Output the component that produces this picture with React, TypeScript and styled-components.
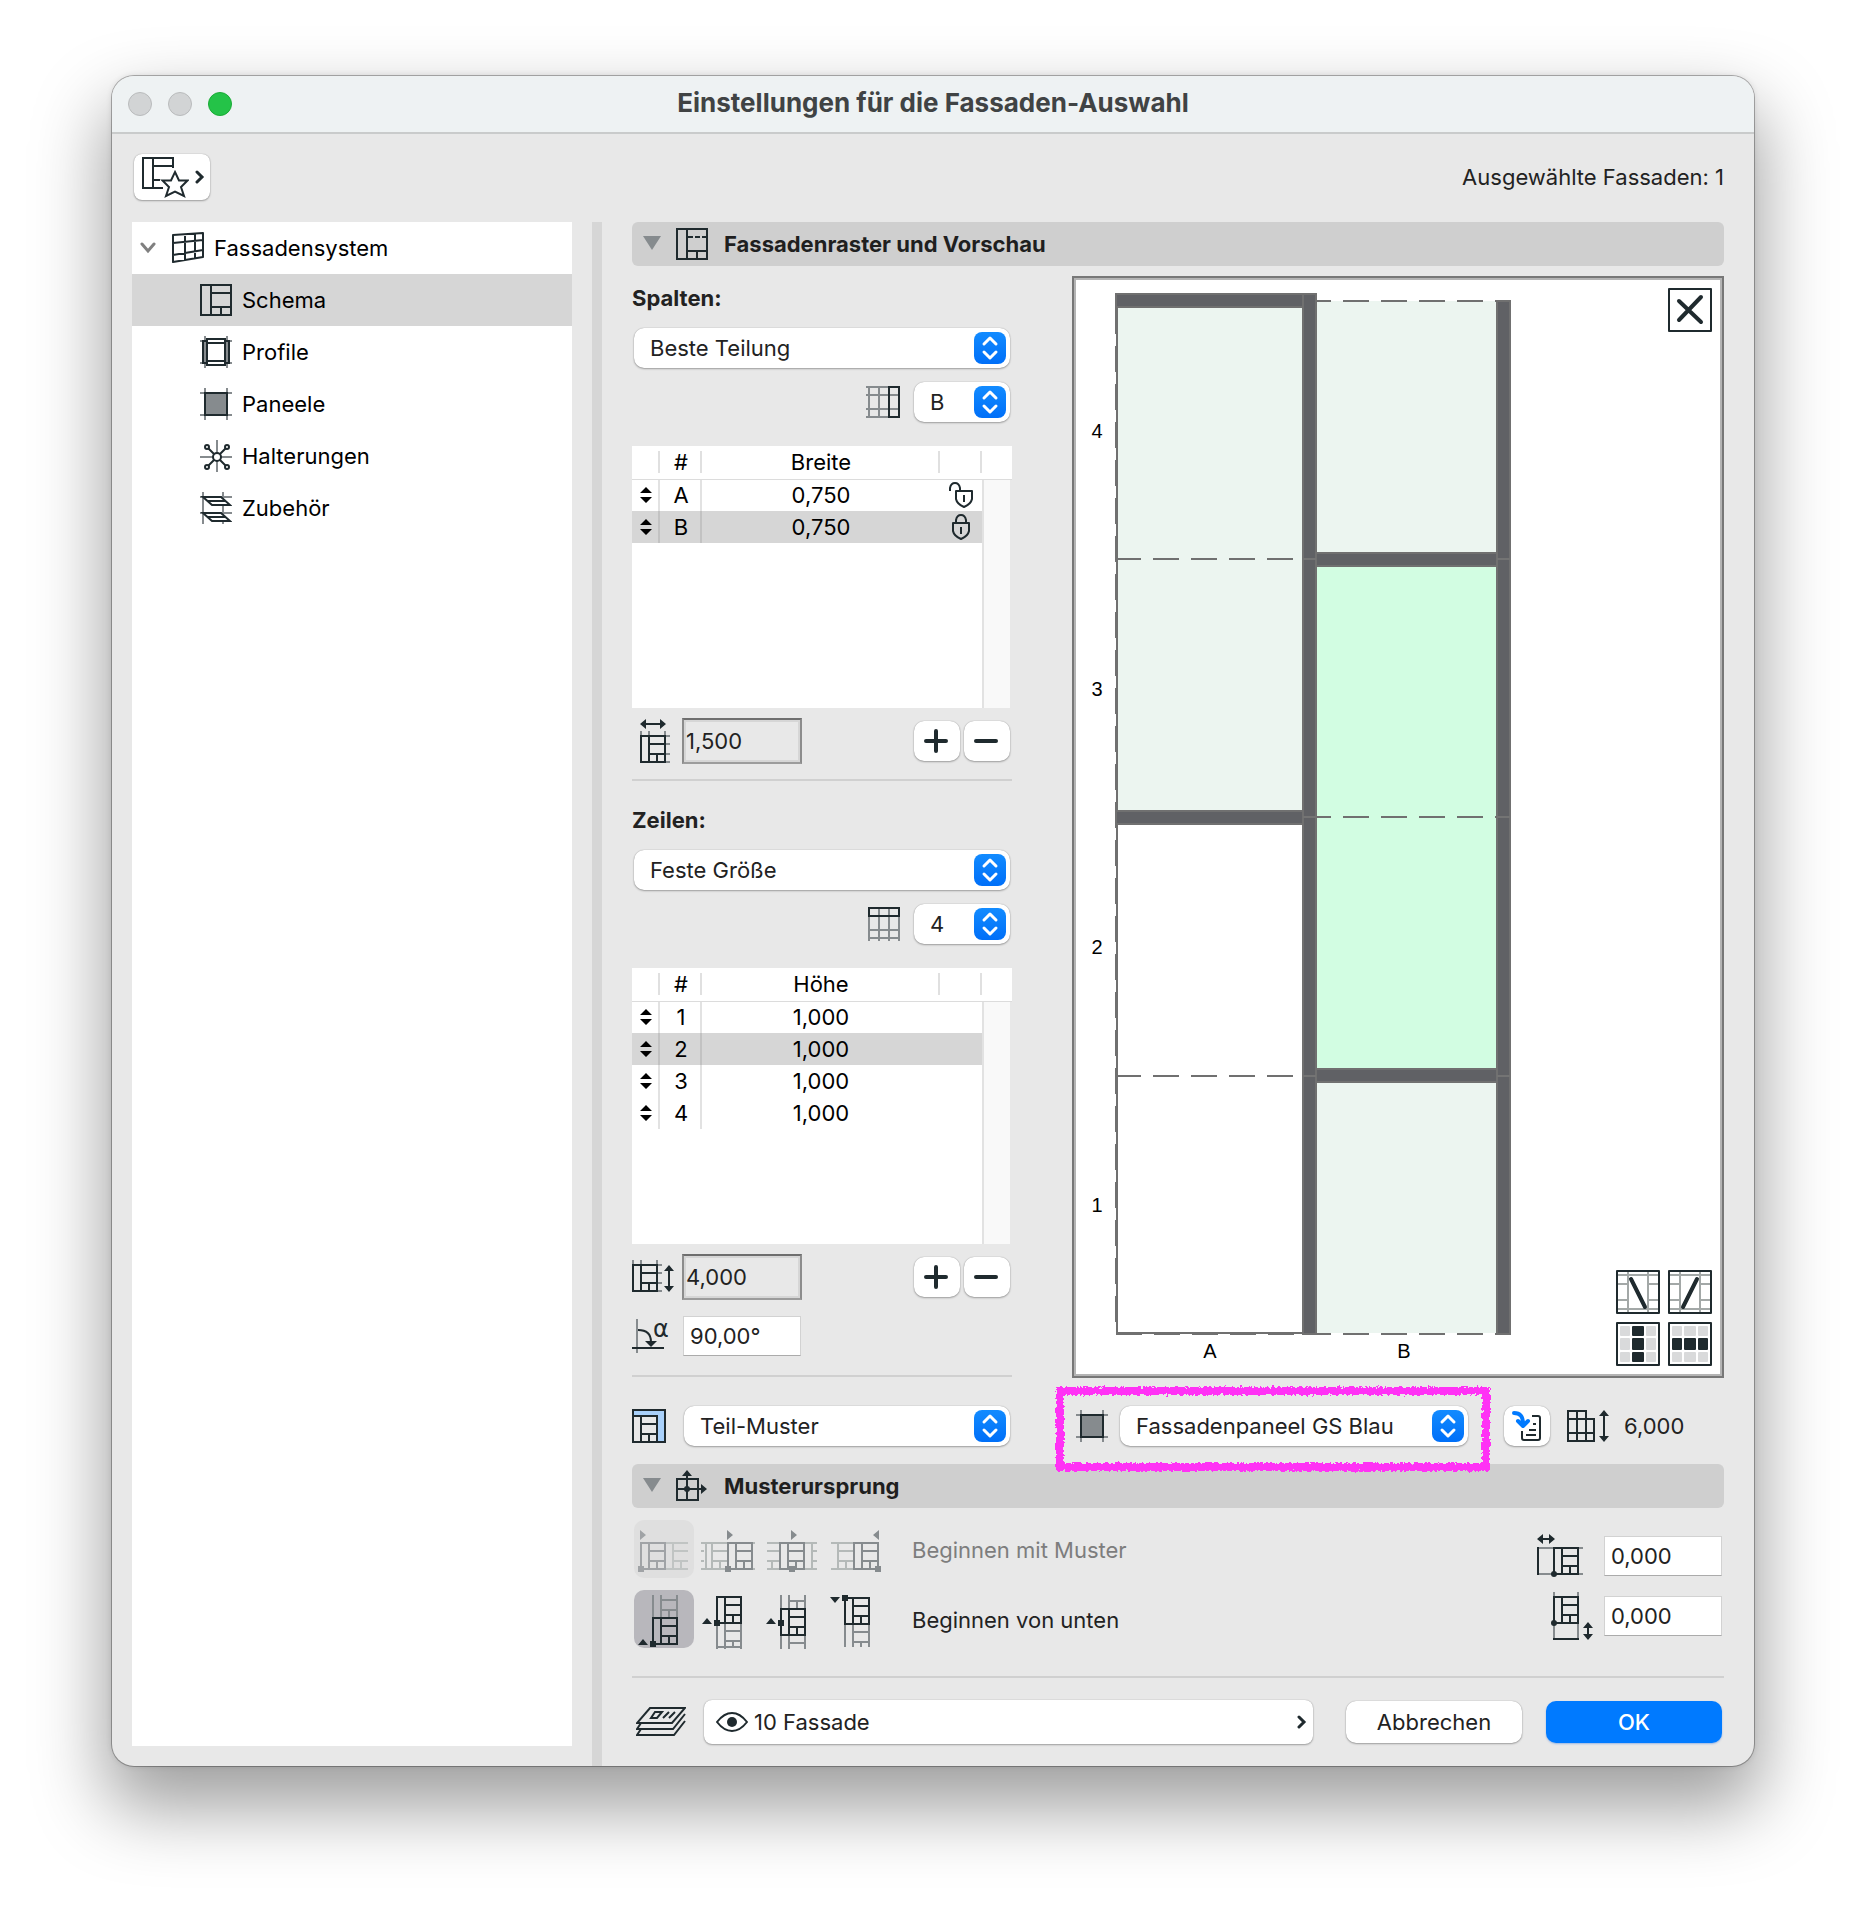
import React, { useId, useState } from 'react';
import styled, { createGlobalStyle, css } from 'styled-components';

const ink = '#1f2a2e';
const soft = '#868b8e';
const faint = '#b4b9b8';
const line = '#d0d0d0';
const blue = '#007aff';

const GlobalStyle = createGlobalStyle`
  * { box-sizing: border-box; }
  body {
    margin: 0;
    background: #fff;
    color: #222;
    font-family: Inter, "Liberation Sans", sans-serif;
    font-size: 22px;
    line-height: 28px;
  }
  button, input, select { font: inherit; color: inherit; margin: 0; }
  svg { display: block; flex: none; }
`;

/* ---------- window frame ---------- */

const Page = styled.div`
  min-height: 100vh;
  padding: 76px 112px 148px;
`;

const Window = styled.main`
  display: flex;
  flex-direction: column;
  border-radius: 22px;
  background: #e8e8e8;
  overflow: hidden;
  box-shadow: 0 0 0 1px rgba(0, 0, 0, 0.28), 0 0 6px rgba(0, 0, 0, 0.12),
    0 36px 72px 6px rgba(0, 0, 0, 0.38);
`;

const TitleBar = styled.header`
  display: grid;
  grid-template-columns: 1fr auto 1fr;
  align-items: center;
  height: 58px;
  padding: 0 16px;
  background: #eef2f3;
  border-bottom: 2px solid #c9cbcb;
`;

const Lights = styled.div`
  display: flex;
  gap: 16px;
`;

const Light = styled.button<{ $on?: boolean }>`
  width: 24px;
  height: 24px;
  padding: 0;
  border-radius: 50%;
  border: 1px solid ${p => (p.$on ? '#1aab35' : '#b9bbbc')};
  background: ${p => (p.$on ? '#24c348' : '#d2d4d5')};
`;

const Title = styled.h1`
  margin: 0;
  padding-bottom: 2px;
  font-size: 26px;
  line-height: 32px;
  font-weight: 700;
  color: #404344;
`;

const Toolbar = styled.div`
  display: flex;
  align-items: center;
  justify-content: space-between;
  height: 88px;
  padding: 0 30px 2px 22px;
`;

const raised = css`
  border: 0;
  background: #fff;
  box-shadow: 0 0 1px rgba(0, 0, 0, 0.35), 0 1px 2px rgba(0, 0, 0, 0.3);
`;

const FavoritesButton = styled.button`
  ${raised}
  display: flex;
  align-items: center;
  justify-content: space-between;
  width: 76px;
  height: 46px;
  padding: 0 5px 0 7px;
  border-radius: 8px;
`;

const Body = styled.div`
  display: grid;
  grid-template-columns: 440px 10px minmax(0, 1fr);
  padding-left: 20px;
  column-gap: 20px;
`;

/* ---------- tree ---------- */

const Tree = styled.nav`
  margin-bottom: 20px;
  background: #fff;
  color: #000;
`;

const TreeItem = styled.button<{ $child?: boolean; $selected?: boolean }>`
  display: flex;
  align-items: center;
  gap: 10px;
  width: 100%;
  height: 52px;
  border: 0;
  padding: 0 0 0 ${p => (p.$child ? 68 : 8)}px;
  text-align: left;
  background: ${p => (p.$selected ? '#d6d6d6' : 'transparent')};
`;

const Twisty = styled.span`
  width: 22px;
`;

const Splitter = styled.div`
  background: #d6d6d6;
`;

/* ---------- editor ---------- */

const Editor = styled.div`
  display: flex;
  flex-direction: column;
  padding: 0 30px 22px 10px;
`;

const SectionBar = styled.h2`
  display: flex;
  align-items: center;
  height: 44px;
  margin: 0;
  padding: 0 10px;
  border-radius: 6px;
  background: #cfcfcf;
  font-size: 22px;
  font-weight: 700;
  color: #1f1f1f;
`;

const SectionIcon = styled.span`
  width: 48px;
  margin-left: 14px;
`;

const Columns = styled.div`
  display: grid;
  grid-template-columns: 380px minmax(0, 1fr);
  column-gap: 60px;
  margin-bottom: 18px;
`;

const Column = styled.div`
  display: flex;
  flex-direction: column;
`;

const GroupLabel = styled.label`
  padding-top: 18px;
  margin-bottom: 16px;
  font-weight: 700;
`;

const Divider = styled.hr<{ $top: number; $bottom: number }>`
  width: 100%;
  height: 2px;
  border: 0;
  background: ${line};
  margin: ${p => p.$top}px 0 ${p => p.$bottom}px;
`;

const Row = styled.div<{ $top?: number; $end?: boolean; $gap?: number }>`
  display: flex;
  align-items: center;
  justify-content: ${p => (p.$end ? 'flex-end' : 'flex-start')};
  gap: ${p => p.$gap ?? 0}px;
  margin-top: ${p => p.$top ?? 0}px;
  padding-right: 2px;
`;

const IconSlot = styled.span<{ $width?: number }>`
  flex: none;
  width: ${p => p.$width ?? 50}px;
`;

const Spacer = styled.span`
  flex: 1;
`;

const SelectBox = styled.span<{ $width?: number }>`
  position: relative;
  display: block;
  height: 40px;
  margin-left: 2px;
  ${p => (p.$width ? `width: ${p.$width}px;` : 'flex: 1;')}
`;

const NativeSelect = styled.select`
  ${raised}
  appearance: none;
  width: 100%;
  height: 40px;
  padding: 0 40px 0 16px;
  border-radius: 10px;
`;

const Stepper = styled.span`
  position: absolute;
  top: 4px;
  right: 4px;
  width: 32px;
  height: 32px;
  border-radius: 8px;
  background: linear-gradient(#128bff, #006ff8);
  pointer-events: none;
`;

const NumberInput = styled.input<{ $sunken?: boolean }>`
  width: 118px;
  height: 40px;
  margin-left: 1px;
  padding: 0 6px;
  border: 1px solid #d2d2d2;
  border-bottom-color: #ababab;
  background: #fff;
  ${p =>
    p.$sunken &&
    css`
      width: 120px;
      height: 46px;
      margin-left: 0;
      padding: 0 2px;
      border: 2px solid #8c8c8c;
      border-top-color: #6e6e6e;
      border-bottom-color: #9c9c9c;
      background: #e8e8e8;
      box-shadow: inset 0 0 0 2px #d6d6d6;
    `}
`;

const SmallButton = styled.button`
  ${raised}
  display: flex;
  align-items: center;
  justify-content: center;
  flex: none;
  width: 46px;
  height: 40px;
  padding: 0;
  border-radius: 10px;
`;

const ButtonPair = styled.div`
  display: flex;
  gap: 4px;
`;

const ApplyGroup = styled.div`
  display: flex;
  align-items: center;
  gap: 15px;
  margin-left: 22px;
`;

/* ---------- size tables ---------- */

const SizeTable = styled.table<{ $height: number }>`
  table-layout: fixed;
  width: 100%;
  height: ${p => p.$height}px;
  margin-top: 24px;
  margin-bottom: 10px;
  border-collapse: collapse;
  background: #fff;
  color: #000;
  text-align: center;
`;

const Col = styled.col<{ $w?: number }>`
  ${p => p.$w && `width: ${p.$w}px;`}
`;

const HeadCell = styled.th<{ $last?: boolean }>`
  height: 33px;
  padding: 0;
  font-weight: 400;
  border-bottom: 1px solid #dcdcdc;
  ${p =>
    !p.$last &&
    css`
      background: linear-gradient(#e0e0e0, #e0e0e0) right center / 2px 22px no-repeat;
    `}
`;

const BodyRow = styled.tr<{ $selected?: boolean }>`
  height: 32px;
  background: ${p => (p.$selected ? '#d6d6d6' : 'transparent')};
`;

const Cell = styled.td<{ $rule?: boolean; $dark?: boolean }>`
  padding: 0;
  line-height: 30px;
  ${p =>
    p.$rule &&
    css`
      background: linear-gradient(${p.$dark ? '#c2c2c2' : '#e2e2e2'}, ${p.$dark ? '#c2c2c2' : '#e2e2e2'})
        right center / 2px 100% no-repeat;
    `}
  svg { margin: 0 auto; }
`;

const TrackCell = styled.td`
  padding: 0;
  background: linear-gradient(90deg, #e2e2e2 2px, #f9f9f9 2px, #f9f9f9 28px, #e8e8e8 28px);
`;

/* ---------- preview ---------- */

const Preview = styled.div`
  position: relative;
  margin-top: 10px;
  border: 2px solid #777;
  background: #fff;
  box-shadow: inset 0 0 0 2px #b4b4b4;
  padding: 2px;
`;

const Drawing = styled.svg`
  width: 100%;
  height: auto;
`;

const AxisText = styled.text`
  font-family: "Liberation Sans", Arial, sans-serif;
  font-size: 20px;
  fill: #000;
  text-anchor: middle;
`;

const TileButton = styled.button`
  display: block;
  width: 44px;
  height: 44px;
  padding: 0;
  border: 2px solid ${ink};
  border-radius: 1px;
  background: #fff;
`;

const CloseCorner = styled.div`
  position: absolute;
  top: 10px;
  right: 10px;
`;

const ToolCorner = styled.div`
  position: absolute;
  right: 10px;
  bottom: 10px;
  display: grid;
  grid-template-columns: 44px 44px;
  gap: 8px;
`;

const Marked = styled.div`
  position: relative;
  display: flex;
  align-items: center;
  width: 396px;
  padding-left: 4px;
`;

const Crayon = styled.svg`
  position: absolute;
  left: -20px;
  top: -24px;
  pointer-events: none;
`;

/* ---------- origin section ---------- */

const OriginGrid = styled.div`
  display: flex;
  justify-content: space-between;
  padding: 12px 2px 0;
`;

const OriginRows = styled.div`
  display: flex;
  flex-direction: column;
  gap: 12px;
`;

const OriginRow = styled.div<{ $dim?: boolean }>`
  display: flex;
  align-items: center;
  gap: 4px;
  color: ${p => (p.$dim ? '#7d7d7d' : '#222')};
`;

const OriginButton = styled.button<{ $bg?: string }>`
  display: flex;
  align-items: center;
  justify-content: center;
  width: 60px;
  height: 58px;
  padding: 0;
  border: 0;
  border-radius: 10px;
  background: ${p => p.$bg ?? 'transparent'};
`;

const OriginText = styled.span`
  margin-left: 22px;
  padding-top: 2px;
`;

const Offsets = styled.div`
  display: flex;
  flex-direction: column;
  gap: 20px;
  padding-top: 16px;
`;

const OffsetField = styled.label`
  display: flex;
  align-items: center;
  gap: 10px;
  height: 40px;
`;

/* ---------- footer ---------- */

const Footer = styled.footer`
  display: flex;
  align-items: center;
  gap: 24px;
  padding: 0 2px 0 4px;
`;

const LayerPicker = styled.div`
  display: flex;
  align-items: center;
  gap: 18px;
  flex: 1;
  margin-right: 9px;
`;

const LayerButton = styled.button`
  ${raised}
  display: flex;
  align-items: center;
  flex: 1;
  gap: 6px;
  height: 44px;
  padding: 0 6px 0 12px;
  border-radius: 8px;
`;

const ActionButton = styled.button<{ $primary?: boolean }>`
  ${raised}
  width: 176px;
  height: 42px;
  padding: 0;
  border-radius: 10px;
  ${p =>
    p.$primary &&
    css`
      background: ${blue};
      color: #fff;
      font-weight: 500;
      box-shadow: 0 1px 2px rgba(0, 90, 220, 0.35);
    `}
`;

/* ---------- icons ---------- */

type IconProps = { w: number; h: number; x?: number; y?: number; children: React.ReactNode };
const Icon = ({ w, h, x = 0, y = 0, children }: IconProps) => (
  <svg width={w} height={h} viewBox={`${x} ${y} ${w} ${h}`} fill="none" stroke={ink} strokeWidth={2} aria-hidden="true">
    {children}
  </svg>
);

const block = (x: number, y: number) =>
  `M${x} ${y}h24v26h-24zM${x + 8} ${y}v26M${x + 8} ${y + 8}h16M${x + 8} ${y + 18}h16M${x + 16} ${y + 18}v8`;

const VArrow = ({ x, y1, y2 }: { x: number; y1: number; y2: number }) => (
  <>
    <path d={`M${x} ${y1 + 3}V${y2 - 3}`} />
    <path d={`M${x} ${y1}l5 6h-10zM${x} ${y2}l5 -6h-10z`} fill={ink} stroke="none" />
  </>
);

const HArrow = ({ y, x1, x2 }: { y: number; x1: number; x2: number }) => (
  <>
    <path d={`M${x1 + 3} ${y}H${x2 - 3}`} />
    <path d={`M${x1} ${y}l6 -5v10zM${x2} ${y}l-6 -5v10z`} fill={ink} stroke="none" />
  </>
);

const Chevron = () => (
  <Icon w={10} h={16}>
    <path d="M2 3l5 5l-5 5" strokeWidth={3} strokeLinecap="round" />
  </Icon>
);

const FavoriteIcon = () => (
  <Icon w={48} h={42}>
    <path d="M32 12V2H2V32H22M12 2V32M12 10H32M12 24H19" />
    <path d="M34 16l4 8.500h8.500l-6.500 6.500l3 9l-9 -4.500l-9 4.500l3 -9l-6.500 -6.500h8.500z" />
  </Icon>
);

const SystemIcon = () => (
  <Icon w={32} h={32}>
    <path d="M1 3L31 1V25L1 30ZM13 2V28M23 2V26M1 11L31 8M1 23L31 18" strokeLinejoin="round" />
  </Icon>
);

const SchemaIcon = ({ dashed }: { dashed?: boolean }) => (
  <Icon w={32} h={32}>
    <path d="M1 1H31V31H1ZM11 1V31M11 23H31M21 23V31" />
    <path d="M11 9H31" strokeDasharray={dashed ? '6 2 5 2 5' : undefined} />
  </Icon>
);

const ProfileIcon = () => (
  <Icon w={32} h={32}>
    <path d="M5 0V32M27 0V32M0 5H32M0 27H32" stroke={soft} />
    <path d="M7 3H25V29H7Z" fill="#fff" />
    <path d="M7 5H3V27H7M25 5H29V27H25M7 7H25M7 25H25" />
  </Icon>
);

const PanelIcon = () => (
  <Icon w={32} h={32}>
    <path d="M5 0V32M27 0V32M0 5H32M0 27H32" stroke={soft} />
    <path d="M5 5H27V27H5Z" fill={soft} />
  </Icon>
);

const FixingIcon = () => (
  <Icon w={32} h={32}>
    <path d="M17 0V32M0 17H32" stroke={soft} />
    <path d="M8 8L26 26M26 8L8 26" />
    <circle cx="17" cy="17" r="4" fill="#fff" />
    <circle cx="7" cy="7" r="2" fill="#fff" />
    <circle cx="27" cy="7" r="2" fill="#fff" />
    <circle cx="7" cy="27" r="2" fill="#fff" />
    <circle cx="27" cy="27" r="2" fill="#fff" />
  </Icon>
);

const AccessoryIcon = () => (
  <Icon w={32} h={32}>
    <path d="M3 0V32M23 0V32M0 5H32M0 21H32" stroke={soft} />
    <path d="M3 5H21L30 13H12ZM7 9H25M3 21H21L30 29H12ZM7 25H25" fill="#fff" />
  </Icon>
);

const ColumnIcon = () => (
  <Icon w={34} h={32}>
    <path d="M3 0V32M13 0V32M0 1H23M0 9H33M0 23H33M0 31H23" stroke={soft} />
    <path d="M23 1H33V31H23Z" />
  </Icon>
);

const RowIcon = () => (
  <Icon w={32} h={34}>
    <path d="M1 9V34M11 0V34M21 0V34M31 9V34M0 23H32M0 31H32" stroke={soft} />
    <path d="M1 1H31V9H1Z" />
  </Icon>
);

const TotalWidthIcon = () => (
  <Icon w={46} h={44} x={-8}>
    <HArrow y={5} x1={0} x2={26} />
    <path d="M1 12V17M9 12V17M25 12V17M25 17H30M25 25H30M25 35H30M25 43H30" stroke={soft} />
    <path d={block(1, 17)} />
  </Icon>
);

const TotalHeightIcon = () => (
  <Icon w={42} h={34}>
    <path d="M1 0V5M9 0V5M25 0V5M25 5H30M25 13H30M25 23H30M25 31H30" stroke={soft} />
    <path d={block(1, 5)} />
    <VArrow x={37} y1={5} y2={32} />
  </Icon>
);

const AlphaText = styled.text`
  font-family: "DejaVu Sans", sans-serif;
  font-size: 24px;
  fill: ${ink};
  stroke: none;
`;

const AngleIcon = () => (
  <Icon w={48} h={34}>
    <path d="M5 0V34" stroke={soft} />
    <path d="M0 29H32M6 11C14 11 19 15 19 23" />
    <path d="M13 22H25L19 28Z" fill={ink} stroke="none" />
    <AlphaText x="21" y="18">α</AlphaText>
  </Icon>
);

const PatternIcon = () => (
  <Icon w={34} h={34}>
    <path d="M1 1H33V33H1Z" fill="#a9d1fb" />
    <path d="M1 7H25V33H1Z" fill="#e8e8e8" />
    <path d={block(1, 7)} />
  </Icon>
);

const TransferIcon = () => (
  <Icon w={30} h={32}>
    <path d="M20 6H26Q28 6 28 8V28Q28 30 26 30H12Q10 30 10 28V21M21 14H24M17 20H24M14 25H24" />
    <path d="M2 3C8 3 11 6 11 14M6 11L11 16L16 11" stroke={blue} strokeWidth={4} strokeLinecap="round" strokeLinejoin="round" />
  </Icon>
);

const GridHeightIcon = () => (
  <Icon w={44} h={32} x={-2}>
    <path d="M1 1H19V9H27V31H1ZM10 1V31M19 9V31M1 9H19M1 23H27" />
    <VArrow x={37} y1={0} y2={32} />
  </Icon>
);

const OriginIcon = () => (
  <Icon w={32} h={32}>
    <path d="M1 9H22V30H1ZM11 4V30M1 19H27" />
    <path d="M11 0L16 6H6ZM31 19L25 14V24Z" fill={ink} stroke="none" />
    <circle cx="11" cy="19" r="3" fill={ink} stroke="none" />
  </Icon>
);

const UpDown = () => (
  <Icon w={12} h={16}>
    <path d="M0 6L6 0L12 6ZM0 10H12L6 16Z" fill="#000" stroke="none" />
  </Icon>
);

const LockIcon = ({ open }: { open?: boolean }) => (
  <Icon w={26} h={26} x={open ? -1 : -4}>
    {open ? (
      <>
        <path d="M7 9H23V17Q22 22 15 25Q8 22 7 17ZM15 13V20" strokeLinejoin="round" />
        <path d="M1 9V6Q2 1 6 1Q10 1 11 6V9" />
      </>
    ) : (
      <>
        <path d="M1 9H17V17Q16 22 9 25Q2 22 1 17ZM9 13V20" strokeLinejoin="round" />
        <path d="M4 9V6Q5 1 9 1Q13 1 14 6V9" />
      </>
    )}
  </Icon>
);

const PlusIcon = () => (
  <Icon w={26} h={24}>
    <path d="M2 12H22M12 2V22" strokeWidth={4} strokeLinecap="round" />
  </Icon>
);

const MinusIcon = () => (
  <Icon w={26} h={24}>
    <path d="M2 12H22" strokeWidth={4} strokeLinecap="round" />
  </Icon>
);

const LayersIcon = () => (
  <Icon w={50} h={30}>
    <path d="M14 1H49L36 16H1ZM19 5H26L21 11H15ZM33 5L27 11M39 5L33 11" />
    <path d="M5 16L1 22H37L49 7M5 22L1 28H38L49 14" />
  </Icon>
);

const EyeIcon = () => (
  <Icon w={32} h={20}>
    <path d="M1 10Q8 1 16 1T31 10Q24 19 16 19T1 10Z" />
    <circle cx="16" cy="10" r="5" fill={ink} stroke="none" />
  </Icon>
);

const horizontalStarts = [
  {
    w: 48, at: 1, opacity: 0.7,
    back: 'M25 14H48M33 14V40M33 22H48M33 32H48M25 40H48M41 32V40',
    arrow: 'M0 1l6 5l-6 5zM-2 37h6v6h-6z',
  },
  {
    w: 54, at: 27, opacity: 1,
    back: 'M0 14H27M5 14V40M11 14V40M11 22H27M0 22H3M0 32H3M11 32H27M19 32V40M0 40H27M51 14H54M51 40H54',
    arrow: 'M26 1l6 5l-6 5zM24 37h6v6h-6z',
  },
  {
    w: 50, at: 13, opacity: 1,
    back: 'M0 14H13M0 22H13M0 32H13M5 32V40M0 40H13M37 14H50M45 14V40M45 22H50M45 32H50M37 40H50',
    arrow: 'M24 1l6 5l-6 5zM22 37h6v6h-6z',
  },
  {
    w: 50, at: 23, opacity: 1,
    back: 'M0 14H23M7 14V40M7 22H23M7 32H23M15 32V40M0 40H23',
    arrow: 'M48 1l-6 5l6 5zM44 37h6v6h-6z',
  },
];

const verticalStarts = [
  { at: 23, back: 'M15 0V23M23 0V23M39 0V23M23 5H39M23 15H39M31 15V23', arrow: 'M0 50H10L5 44ZM12 46h6v6h-6z' },
  { at: 2, back: 'M15 28V54M23 28V54M39 28V54M23 36H39M23 46H39M31 46V52M15 52H39', arrow: 'M0 29H10L5 23ZM12 25h6v6h-6z' },
  { at: 14, back: 'M15 0V14M23 0V14M39 0V14M23 6H39M31 6V14M15 40V54M23 40V54M39 40V54M23 48H39', arrow: 'M0 29H10L5 23ZM12 25h6v6h-6z' },
  { at: 3, back: 'M15 29V52M23 29V52M39 29V52M23 37H39M23 47H39M31 47V52', arrow: 'M0 2H10L5 8ZM12 0h6v6h-6z' },
];

/* ---------- composed controls ---------- */

const Popup = ({ options, width, label, id }: { options: string[]; width?: number; label: string; id?: string }) => (
  <SelectBox $width={width}>
    <NativeSelect id={id} aria-label={label} defaultValue={options[0]}>
      {options.map(o => (
        <option key={o}>{o}</option>
      ))}
    </NativeSelect>
    <Stepper>
      <svg width="32" height="32" viewBox="0 0 32 32" fill="none" stroke="#fff" strokeWidth="3" strokeLinecap="round" strokeLinejoin="round" aria-hidden="true">
        <path d="M10 12L16 6L22 12M10 20L16 26L22 20" />
      </svg>
    </Stepper>
  </SelectBox>
);

type Entry = { name: string; value: string; lock?: 'open' | 'closed' };

const Sizes = ({ title, entries, initial, height }: { title: string; entries: Entry[]; initial: string; height: number }) => {
  const [selected, setSelected] = useState(initial);
  return (
    <SizeTable $height={height}>
      <colgroup>
        <Col $w={28} />
        <Col $w={42} />
        <Col />
        <Col $w={42} />
        <Col $w={30} />
      </colgroup>
      <thead>
        <tr>
          <HeadCell />
          <HeadCell scope="col">#</HeadCell>
          <HeadCell scope="col">{title}</HeadCell>
          <HeadCell />
          <HeadCell $last />
        </tr>
      </thead>
      <tbody>
        {entries.map(e => {
          const on = e.name === selected;
          return (
            <BodyRow key={e.name} $selected={on} onClick={() => setSelected(e.name)}>
              <Cell $rule $dark={on}><UpDown /></Cell>
              <Cell $rule $dark={on}>{e.name}</Cell>
              <Cell>{e.value}</Cell>
              <Cell>{e.lock && <LockIcon open={e.lock === 'open'} />}</Cell>
              <TrackCell />
            </BodyRow>
          );
        })}
        <tr>
          <td colSpan={4} />
          <TrackCell />
        </tr>
      </tbody>
    </SizeTable>
  );
};

const AddRemove = () => (
  <ButtonPair>
    <SmallButton aria-label="Hinzufügen"><PlusIcon /></SmallButton>
    <SmallButton aria-label="Entfernen"><MinusIcon /></SmallButton>
  </ButtonPair>
);

const FacadeDrawing = () => {
  const levels = [21, 279, 537, 796, 1054];
  const member = { fill: '#606165', stroke: '#707070', strokeWidth: 2 };
  const dash = { stroke: '#707070', strokeWidth: 2, strokeDasharray: '26 12', fill: 'none' };
  return (
    <Drawing viewBox="0 0 644 1094" role="img" aria-label="Fassadenvorschau">
      <rect x="42" y="28" width="184" height="502" fill="#ecf5f0" />
      <rect x="241" y="21" width="179" height="251" fill="#ecf5f0" />
      <rect x="241" y="286" width="179" height="503" fill="#d2fde2" />
      <rect x="241" y="803" width="179" height="250" fill="#ecf5f0" />
      <path d="M41 28V1053H226" fill="none" stroke="#707070" strokeWidth="2" />
      <path d="M40 28V1054H226" {...dash} />
      <path d={`M39 ${levels[1]}H226M39 ${levels[3]}H226`} {...dash} />
      <path d={`M229 ${levels[0]}H420M229 ${levels[2]}H420M229 ${levels[4]}H420`} {...dash} />
      <rect x="40" y="14" width="187" height="13" {...member} />
      <rect x="40" y="531" width="187" height="13" {...member} />
      <rect x="240" y="273" width="181" height="13" {...member} />
      <rect x="240" y="789" width="181" height="13" {...member} />
      <rect x="227" y="14" width="13" height="1040" {...member} />
      <rect x="421" y="21" width="13" height="1033" {...member} />
      <path d="M227 279H240M421 279H434M227 537H240M421 537H434M227 796H240M421 796H434" stroke="#747474" strokeWidth="2" />
      {['4', '3', '2', '1'].map((n, i) => (
        <AxisText key={n} x="21" y={158 + i * 258}>{n}</AxisText>
      ))}
      <AxisText x="134" y="1078">A</AxisText>
      <AxisText x="328" y="1078">B</AxisText>
    </Drawing>
  );
};

const tileGrid = (active: (c: number, r: number) => boolean) => (
  <svg width="40" height="40" viewBox="0 0 40 40" aria-hidden="true">
    {[0, 1, 2].map(r =>
      [0, 1, 2].map(c => (
        <rect
          key={`${r}${c}`}
          x={[2, 14, 28][c]}
          y={[2, 14, 28][r]}
          width={[10, 12, 10][c]}
          height={[10, 12, 10][r]}
          rx="1"
          fill={active(c, r) ? ink : '#d9dadb'}
        />
      )),
    )}
  </svg>
);

const diagonalTile = (d: string) => (
  <svg width="40" height="40" viewBox="0 0 40 40" fill="none" aria-hidden="true">
    <path d="M10 0V40M30 0V40M0 3H40M0 37H40M0 12H10M30 12H40M0 28H10M30 28H40" stroke="#a3a8a7" strokeWidth="2" />
    <path d={d} stroke={ink} strokeWidth="4" strokeLinecap="round" />
  </svg>
);

const treeItems = [
  { name: 'Schema', icon: <SchemaIcon /> },
  { name: 'Profile', icon: <ProfileIcon /> },
  { name: 'Paneele', icon: <PanelIcon /> },
  { name: 'Halterungen', icon: <FixingIcon /> },
  { name: 'Zubehör', icon: <AccessoryIcon /> },
];

const Section = ({ icon, children }: { icon: React.ReactNode; children: React.ReactNode }) => (
  <SectionBar>
    <svg width="20" height="16" viewBox="0 0 20 16" aria-hidden="true">
      <path d="M1 0H19L10 14Z" fill={soft} />
    </svg>
    <SectionIcon>{icon}</SectionIcon>
    {children}
  </SectionBar>
);

export default function App() {
  const id = useId();
  const [page, setPage] = useState('Schema');
  return (
    <Page>
      <GlobalStyle />
      <Window>
        <TitleBar>
          <Lights>
            <Light aria-label="Schließen" />
            <Light aria-label="Minimieren" />
            <Light $on aria-label="Zoomen" />
          </Lights>
          <Title>Einstellungen für die Fassaden-Auswahl</Title>
        </TitleBar>

        <Toolbar>
          <FavoritesButton aria-label="Favoriten">
            <FavoriteIcon />
            <Chevron />
          </FavoritesButton>
          <span>Ausgewählte Fassaden: 1</span>
        </Toolbar>

        <Body>
          <Tree>
            <TreeItem>
              <Twisty>
                <svg width="18" height="14" viewBox="1 0 18 14" fill="none" stroke="#808080" strokeWidth="3" strokeLinecap="round" aria-hidden="true">
                  <path d="M3 3L9 10L15 3" />
                </svg>
              </Twisty>
              <SystemIcon />
              Fassadensystem
            </TreeItem>
            {treeItems.map(t => (
              <TreeItem key={t.name} $child $selected={t.name === page} onClick={() => setPage(t.name)}>
                {t.icon}
                {t.name}
              </TreeItem>
            ))}
          </Tree>
          <Splitter />

          <Editor>
            <Section icon={<SchemaIcon dashed />}>Fassadenraster und Vorschau</Section>
            <Columns>
              <Column>
                <GroupLabel htmlFor={`${id}c`}>Spalten:</GroupLabel>
                <Row>
                  <Popup id={`${id}c`} label="Spalten" options={['Beste Teilung', 'Feste Größe']} />
                </Row>
                <Row $top={14} $end $gap={12}>
                  <ColumnIcon />
                  <Popup label="Spalte" width={96} options={['B', 'A']} />
                </Row>
                <Sizes
                  title="Breite"
                  initial="B"
                  height={262}
                  entries={[
                    { name: 'A', value: '0,750', lock: 'open' },
                    { name: 'B', value: '0,750', lock: 'closed' },
                  ]}
                />
                <Row>
                  <IconSlot><TotalWidthIcon /></IconSlot>
                  <NumberInput $sunken readOnly aria-label="Gesamtbreite" defaultValue="1,500" />
                  <Spacer />
                  <AddRemove />
                </Row>
                <Divider $top={15} $bottom={7} />
                <GroupLabel htmlFor={`${id}r`}>Zeilen:</GroupLabel>
                <Row>
                  <Popup id={`${id}r`} label="Zeilen" options={['Feste Größe', 'Beste Teilung']} />
                </Row>
                <Row $top={14} $end $gap={12}>
                  <RowIcon />
                  <Popup label="Zeile" width={96} options={['4', '3', '2', '1']} />
                </Row>
                <Sizes
                  title="Höhe"
                  initial="2"
                  height={276}
                  entries={['1', '2', '3', '4'].map(name => ({ name, value: '1,000' }))}
                />
                <Row>
                  <IconSlot><TotalHeightIcon /></IconSlot>
                  <NumberInput $sunken readOnly aria-label="Gesamthöhe" defaultValue="4,000" />
                  <Spacer />
                  <AddRemove />
                </Row>
                <Row $top={16}>
                  <IconSlot><AngleIcon /></IconSlot>
                  <NumberInput aria-label="Winkel" defaultValue="90,00°" />
                </Row>
                <Divider $top={19} $bottom={29} />
                <Row>
                  <IconSlot><PatternIcon /></IconSlot>
                  <Popup label="Muster" options={['Teil-Muster', 'Ganzes Muster']} />
                </Row>
              </Column>

              <Column>
                <Preview>
                  <FacadeDrawing />
                  <CloseCorner>
                    <TileButton aria-label="Vorschau leeren">
                      <svg width="40" height="40" viewBox="0 0 40 40" aria-hidden="true">
                        <path d="M9 11L31 32M31 7L9 30" stroke={ink} strokeWidth="4" strokeLinecap="round" />
                      </svg>
                    </TileButton>
                  </CloseCorner>
                  <ToolCorner>
                    <TileButton aria-label="Diagonale fallend">{diagonalTile('M13 7L27 35')}</TileButton>
                    <TileButton aria-label="Diagonale steigend">{diagonalTile('M27 7L13 35')}</TileButton>
                    <TileButton aria-label="Spalte wählen">{tileGrid(c => c === 1)}</TileButton>
                    <TileButton aria-label="Zeile wählen">{tileGrid((_, r) => r === 1)}</TileButton>
                  </ToolCorner>
                </Preview>
                <Row $top={28} $gap={14}>
                  <Marked>
                    <IconSlot $width={42}><PanelIcon /></IconSlot>
                    <Popup label="Paneel" options={['Fassadenpaneel GS Blau']} />
                    <Crayon width="444" height="96" viewBox="0 0 444 96" aria-hidden="true">
                      <filter id="crayon" x="-5%" y="-20%" width="110%" height="140%">
                        <feTurbulence type="fractalNoise" baseFrequency="0.35" numOctaves="2" seed="4" />
                        <feDisplacementMap in="SourceGraphic" scale="6" xChannelSelector="R" yChannelSelector="G" />
                      </filter>
                      <path d="M8 9H434V85H8Z" fill="none" stroke="#ff33f5" strokeWidth="8" filter="url(#crayon)" />
                    </Crayon>
                  </Marked>
                  <ApplyGroup>
                    <SmallButton aria-label="Einstellungen übertragen"><TransferIcon /></SmallButton>
                    <GridHeightIcon />
                    <span>6,000</span>
                  </ApplyGroup>
                </Row>
              </Column>
            </Columns>

            <Section icon={<OriginIcon />}>Musterursprung</Section>
            <OriginGrid>
              <OriginRows>
                <OriginRow $dim>
                  {horizontalStarts.map((s, i) => (
                    <OriginButton key={i} disabled aria-label={`Horizontaler Beginn ${i + 1}`} $bg={i === 0 ? '#dfdfdf' : undefined}>
                      <svg width={s.w} height={50} viewBox={`0 -5 ${s.w} 50`} overflow="visible" fill="none" strokeWidth={2} opacity={s.opacity} aria-hidden="true">
                        <path d={s.back} stroke={faint} />
                        <path d={block(s.at, 14)} stroke={soft} />
                        <path d={s.arrow} fill={soft} stroke="none" />
                      </svg>
                    </OriginButton>
                  ))}
                  <OriginText>Beginnen mit Muster</OriginText>
                </OriginRow>
                <OriginRow>
                  {verticalStarts.map((s, i) => (
                    <OriginButton key={i} aria-label={`Vertikaler Beginn ${i + 1}`} $bg={i === 0 ? '#b8b7bc' : undefined}>
                      <Icon w={54} h={60} x={-1} y={-6}>
                        <path d={s.back} stroke={soft} />
                        <path d={block(15, s.at)} />
                        <path d={s.arrow} fill={ink} stroke="none" />
                      </Icon>
                    </OriginButton>
                  ))}
                  <OriginText>Beginnen von unten</OriginText>
                </OriginRow>
              </OriginRows>
              <Offsets>
                <OffsetField>
                  <Icon w={56} h={44}>
                    <HArrow y={5} x1={0} x2={18} />
                    <path d="M1 14H17M1 40H17M41 14H46M41 40H46" stroke={soft} />
                    <path d={`M1 13V41${block(17, 14)}`} />
                    <circle cx="17" cy="40" r="3" fill={ink} stroke="none" />
                  </Icon>
                  <NumberInput aria-label="Horizontaler Versatz" defaultValue="0,000" />
                </OffsetField>
                <OffsetField>
                  <Icon w={56} h={48} x={-14}>
                    <path d="M3 0V47M27 0V47" stroke={soft} />
                    <path d={`M2 47H28${block(3, 5)}`} />
                    <circle cx="3" cy="31" r="3" fill={ink} stroke="none" />
                    <VArrow x={37} y1={30} y2={48} />
                  </Icon>
                  <NumberInput aria-label="Vertikaler Versatz" defaultValue="0,000" />
                </OffsetField>
              </Offsets>
            </OriginGrid>

            <Divider $top={28} $bottom={22} />
            <Footer>
              <LayerPicker>
                <LayersIcon />
                <LayerButton>
                  <EyeIcon />
                  10 Fassade
                  <Spacer />
                  <Chevron />
                </LayerButton>
              </LayerPicker>
              <ActionButton>Abbrechen</ActionButton>
              <ActionButton $primary>OK</ActionButton>
            </Footer>
          </Editor>
        </Body>
      </Window>
    </Page>
  );
}
